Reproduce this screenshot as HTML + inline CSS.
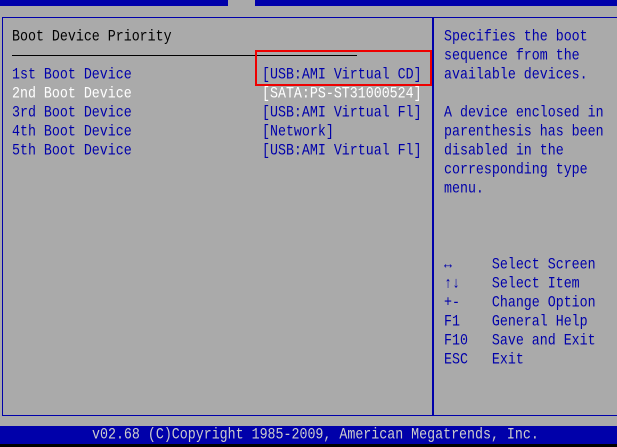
<!DOCTYPE html><html><head><style>
body{margin:0;width:617px;height:447px;background:#000;position:relative;overflow:hidden;font-family:"Liberation Mono",monospace;font-size:13.3px;}
.a{position:absolute}
.t{position:absolute;white-space:pre;line-height:19px;height:19px;transform:scaleY(1.15);transform-origin:0 50%}
.b{color:#0000aa}.w{color:#fff}.k{color:#000}
</style></head><body>
<div class="a" style="left:0;top:0;width:617px;height:444px;background:#aaaaaa"></div>
<div class="a" style="left:0;top:0;width:617px;height:6px;background:#0000aa"></div>
<div class="a" style="left:228px;top:0;width:27px;height:6px;background:#aaaaaa;overflow:hidden"><div class="t w" style="left:0;top:-14px">Boot</div></div>
<div class="a" style="left:2px;top:17px;width:615px;height:399px;border-top:1px solid #0000aa;border-left:1px solid #0000aa;border-bottom:1px solid #0000aa;box-sizing:border-box"></div>
<div class="a" style="left:432px;top:17px;width:2px;height:399px;background:#0000aa"></div>
<div class="a" style="left:12px;top:55px;width:345px;height:1px;background:#000"></div>
<div class="a" style="left:255px;top:50px;width:177px;height:36px;border:2px solid #e00;box-sizing:border-box"></div>
<div class="t k" style="left:12px;top:27px">Boot Device Priority</div>
<div class="t b" style="left:12px;top:65px">1st Boot Device</div>
<div class="t w" style="left:12px;top:84px">2nd Boot Device</div>
<div class="t b" style="left:12px;top:103px">3rd Boot Device</div>
<div class="t b" style="left:12px;top:122px">4th Boot Device</div>
<div class="t b" style="left:12px;top:141px">5th Boot Device</div>
<div class="t b" style="left:262px;top:65px">[USB:AMI Virtual CD]</div>
<div class="t w" style="left:262px;top:84px">[SATA:PS-ST31000524]</div>
<div class="t b" style="left:262px;top:103px">[USB:AMI Virtual Fl]</div>
<div class="t b" style="left:262px;top:122px">[Network]</div>
<div class="t b" style="left:262px;top:141px">[USB:AMI Virtual Fl]</div>
<div class="t b" style="left:444px;top:27px">Specifies the boot</div>
<div class="t b" style="left:444px;top:46px">sequence from the</div>
<div class="t b" style="left:444px;top:65px">available devices.</div>
<div class="t b" style="left:444px;top:103px">A device enclosed in</div>
<div class="t b" style="left:444px;top:122px">parenthesis has been</div>
<div class="t b" style="left:444px;top:141px">disabled in the</div>
<div class="t b" style="left:444px;top:160px">corresponding type</div>
<div class="t b" style="left:444px;top:179px">menu.</div>
<div class="t b" style="left:444px;top:255px">↔     Select Screen</div>
<div class="t b" style="left:444px;top:274px">↑↓    Select Item</div>
<div class="t b" style="left:444px;top:293px">+-    Change Option</div>
<div class="t b" style="left:444px;top:312px">F1    General Help</div>
<div class="t b" style="left:444px;top:331px">F10   Save and Exit</div>
<div class="t b" style="left:444px;top:350px">ESC   Exit</div>
<div class="a" style="left:0;top:426px;width:617px;height:18px;background:#0000aa"></div>
<div class="t" style="left:92px;top:426px;color:#cccccc;line-height:18px;height:18px">v02.68 (C)Copyright 1985-2009, American Megatrends, Inc.</div>
</body></html>
